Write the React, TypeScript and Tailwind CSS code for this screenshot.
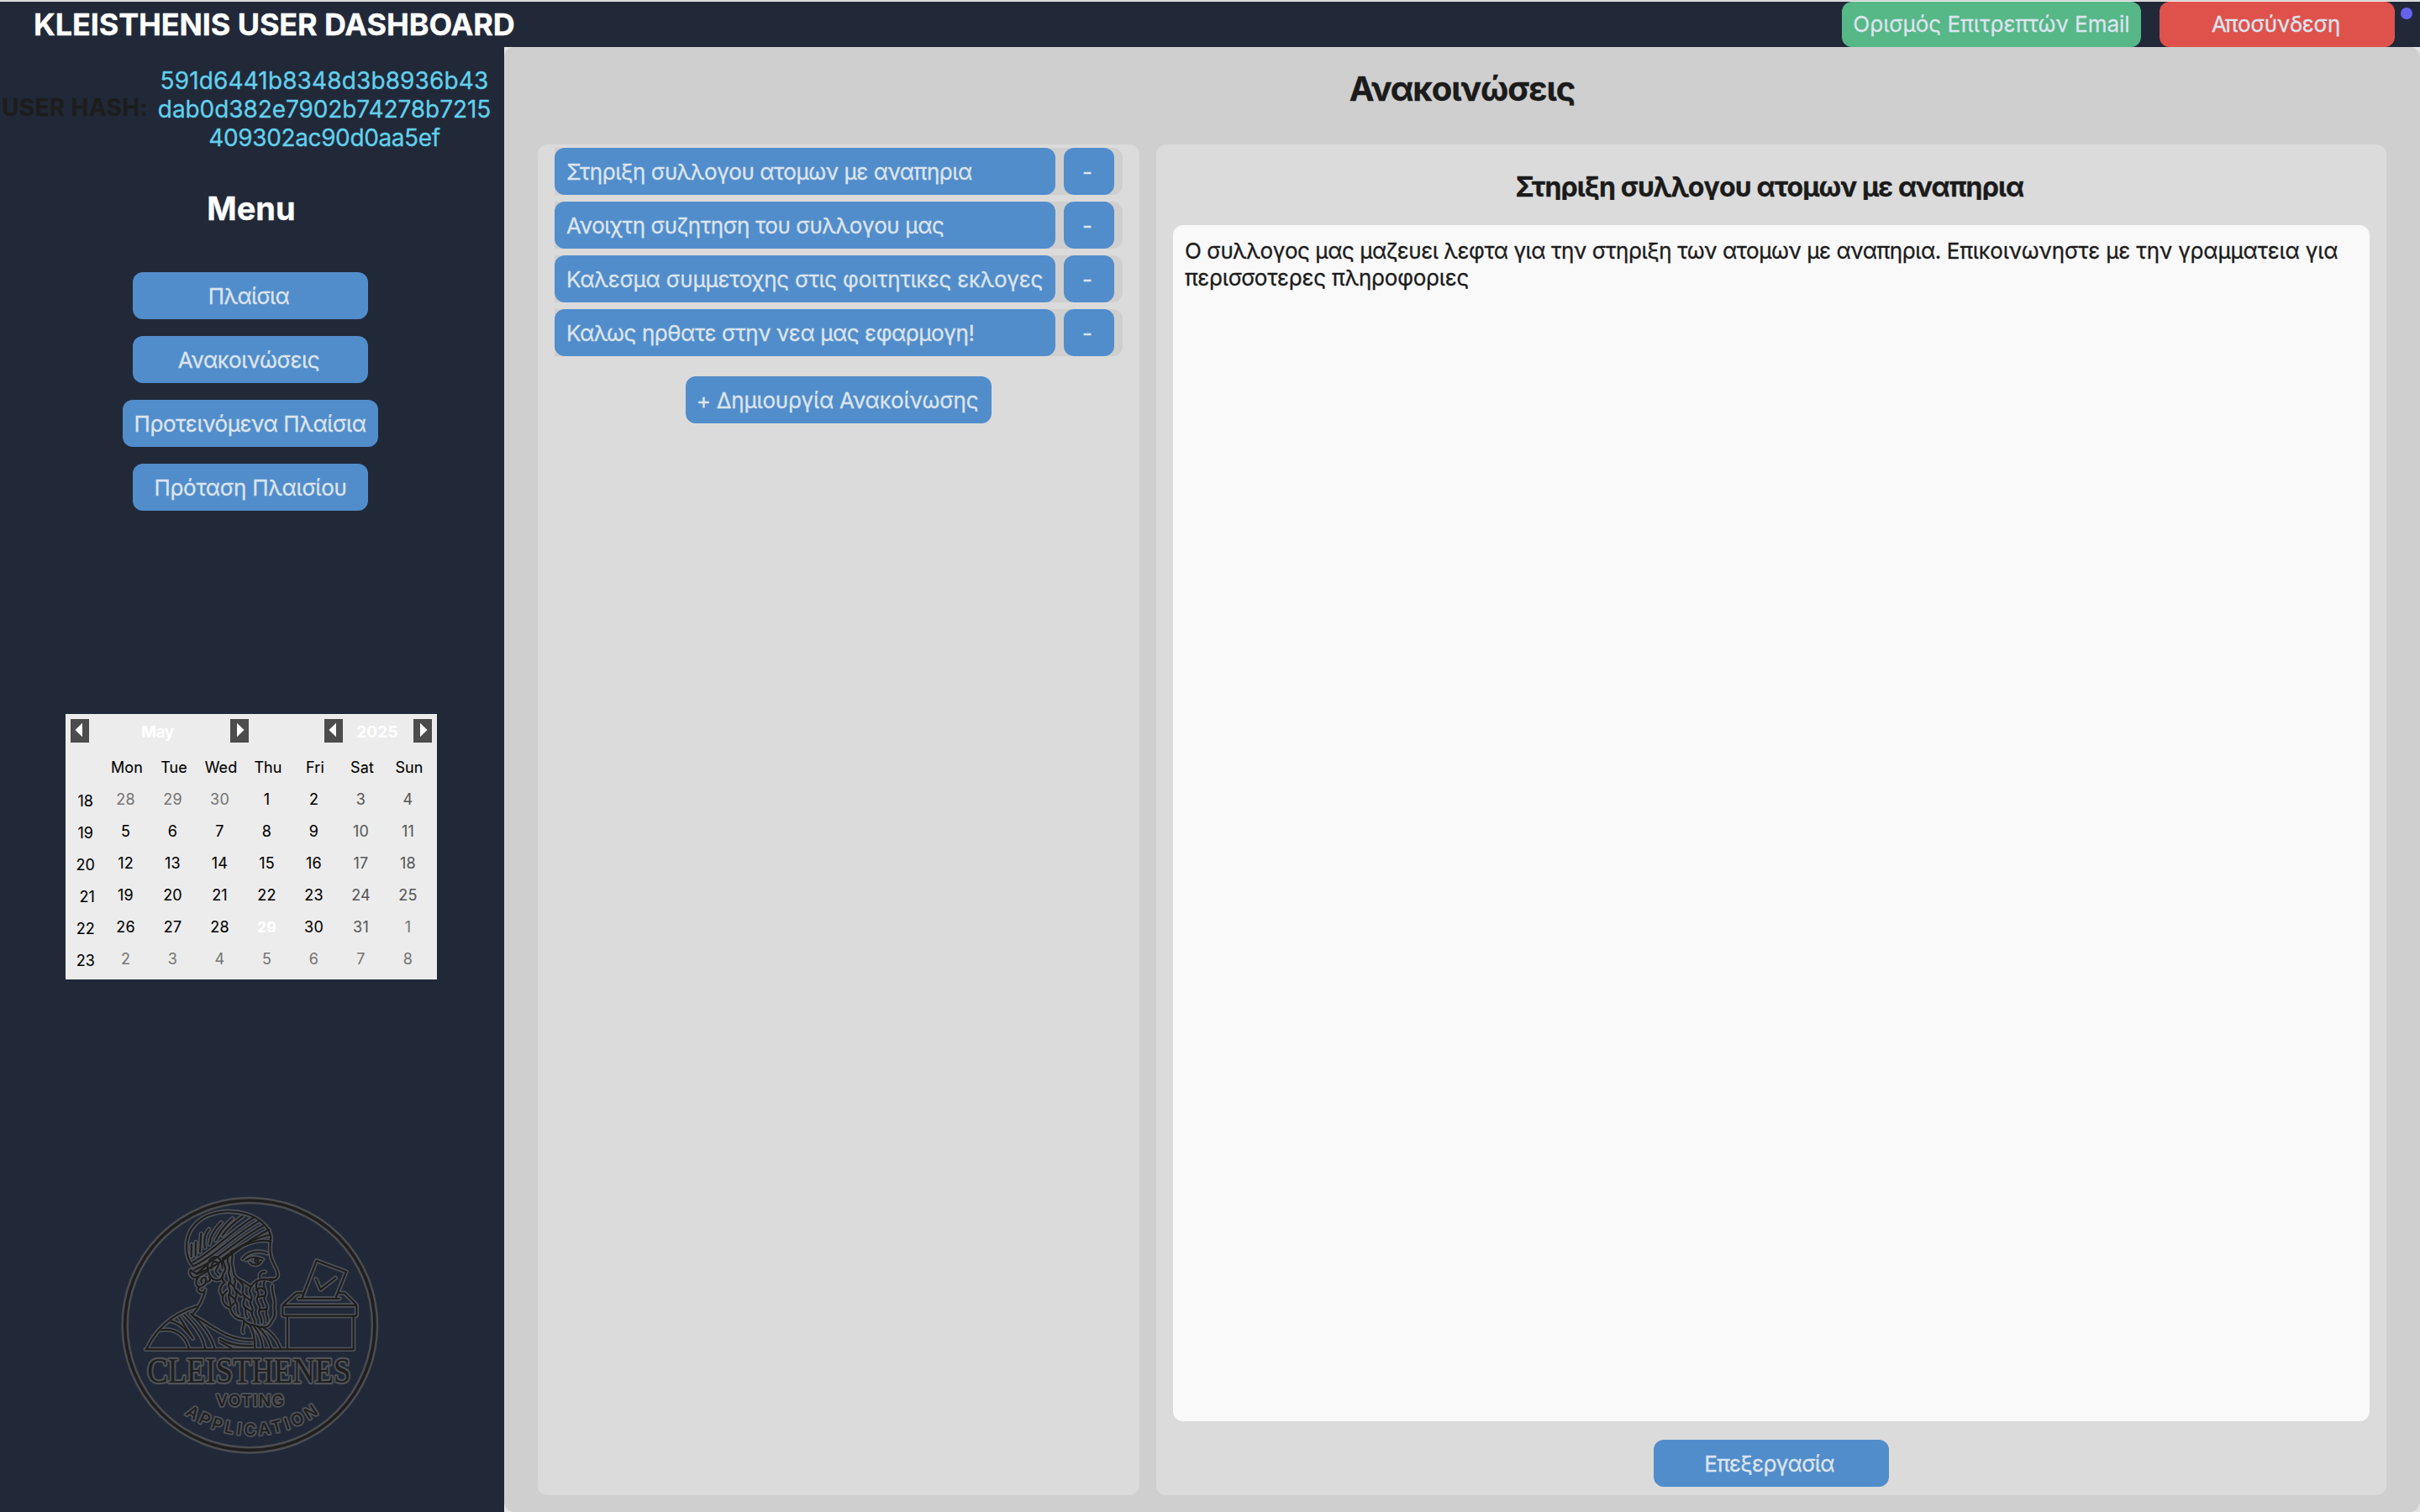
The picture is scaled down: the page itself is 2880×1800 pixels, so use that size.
import React from "react";

type Spaced = { text: string; spacing: string };

const menu: (Spaced & { width: string })[] = [
  { text: "Πλαίσια", spacing: "pr-[4px] tracking-[-0.68px]", width: "w-[280px]" },
  { text: "Ανακοινώσεις", spacing: "pr-[4px] tracking-[-0.37px]", width: "w-[280px]" },
  { text: "Προτεινόμενα Πλαίσια", spacing: "pr-[1px] tracking-[-0.4px]", width: "w-[304px]" },
  { text: "Πρόταση Πλαισίου", spacing: "tracking-[-0.3px]", width: "w-[280px]" },
];

const announcements: Spaced[] = [
  { text: "Στηριξη συλλογου ατομων με αναπηρια", spacing: "tracking-[-0.442px]" },
  { text: "Ανοιχτη συζητηση του συλλογου μας", spacing: "tracking-[-0.388px]" },
  { text: "Καλεσμα συμμετοχης στις φοιτητικες εκλογες", spacing: "tracking-[-0.2px]" },
  { text: "Καλως ηρθατε στην νεα μας εφαρμογη!", spacing: "tracking-[-0.42px]" },
];

const weekdays = ["Mon", "Tue", "Wed", "Thu", "Fri", "Sat", "Sun"];

const weeks = [
  { week: 18, days: [28, 29, 30, 1, 2, 3, 4] },
  { week: 19, days: [5, 6, 7, 8, 9, 10, 11] },
  { week: 20, days: [12, 13, 14, 15, 16, 17, 18] },
  { week: 21, days: [19, 20, 21, 22, 23, 24, 25] },
  { week: 22, days: [26, 27, 28, 29, 30, 31, 1] },
  { week: 23, days: [2, 3, 4, 5, 6, 7, 8] },
];

function dayStyle(row: number, col: number, day: number) {
  const outside = (row === 0 && day > 20) || (row >= 4 && day < 10);
  if (outside) return "text-[#777777]";
  if (row === 4 && day === 29) return "font-bold text-white";
  if (col >= 5) return "text-[#585858]";
  return "text-black";
}

function Arrow({ dir }: { dir: "left" | "right" }) {
  return (
    <button className="h-[28px] w-[22px] shrink-0 bg-[#4c4c4c]">
      <svg width="22" height="28" viewBox="0 0 22 28" fill="#ffffff" className="block">
        {dir === "left" ? <path d="M5.5 13L14 4.7V21.3Z" /> : <path d="M16.5 13L8 4.7V21.3Z" />}
      </svg>
    </button>
  );
}

function Calendar() {
  return (
    <div className="ml-[78px] h-[316px] w-[442px] bg-[#ececec] pt-[6px] text-[18px] leading-[38px] [-webkit-text-stroke:0.1px]">
      <div className="flex h-[28px] items-center px-[6px] text-[19px] font-bold leading-[30px] text-white">
        <Arrow dir="left" />
        <span className="w-[168px] pr-[5px] pt-[3px] text-center tracking-[-0.4px]">May</span>
        <Arrow dir="right" />
        <span className="w-[90px]" />
        <Arrow dir="left" />
        <span className="w-[84px] pr-[2px] pt-[3px] text-center tracking-[0.2px]">2025</span>
        <Arrow dir="right" />
      </div>
      <div className="mt-[11px] flex pl-[45px] text-black">
        {weekdays.map((d) => (
          <span key={d} className="w-[56px] text-center tracking-[0.1px]">
            {d}
          </span>
        ))}
      </div>
      {weeks.map(({ week, days }, row) => (
        <div key={week} className="flex h-[38px]">
          <span
            className={
              week === 21
                ? "w-[43.5px] pl-[8px] pt-[2px] text-center text-black"
                : "w-[43.5px] pl-[4px] pt-[2px] text-center text-black"
            }
          >
            {week}
          </span>
          {days.map((day, col) => (
            <span key={col} className={`w-[56px] text-center tracking-[0.2px] ${dayStyle(row, col, day)}`}>
              {day}
            </span>
          ))}
        </div>
      ))}
    </div>
  );
}

function LogoLines() {
  return (
    <>
      {/* head and headband */}
      <path d="M299 292C268 256 268 190 300 150C345 94 430 88 490 106C540 122 574 156 578 192" />
      <path d="M298 278C360 250 430 170 516 118" />
      <path d="M300 292C380 256 440 184 536 130" />
      <path d="M304 306C404 262 456 196 552 146" />
      <path d="M312 320C420 280 470 208 570 162" />
      <path d="M405 264C450 232 500 196 574 180" />
      <path d="M436 240C480 216 530 192 577 204" />
      <path d="M293 258L294 214M308 254L309 206M324 242L328 176M342 226C336 196 342 176 356 160M358 214C360 188 376 160 400 136M380 200C394 170 414 144 440 122M404 182C424 154 444 136 476 114" />
      {/* profile */}
      <path d="M576 192C573 232 573 254 584 276C592 294 602 308 602 322C602 336 590 342 574 337" />
      <path d="M538 333C534 318 546 310 556 312" />
      <path d="M476 266C496 240 530 234 564 246" />
      <path d="M488 270C506 258 528 258 548 268M502 278C514 290 530 290 542 276" />
      <circle cx="526" cy="272" r="6" />
      {/* ear and nape */}
      <path d="M404 300C404 268 388 254 372 260C350 268 346 302 358 324C370 346 396 348 406 328" />
      <path d="M366 300C362 280 376 270 388 280C396 292 382 300 380 308C380 318 388 318 390 324" />
      <path d="M346 290L312 320L290 306C284 326 300 338 318 330C308 344 306 362 322 366C312 374 318 388 340 386" />
      <path d="M318 330C330 318 346 316 352 308M322 366C340 362 350 350 344 334C334 330 324 340 330 350M344 348C360 350 362 340 358 330" />
      <path d="M342 376C336 410 322 436 296 466" />
      {/* beard */}
      <path d="M436 240C446 262 432 276 440 294C446 316 438 322 462 340C480 346 492 358 506 366C520 342 548 332 582 344" />
      <path d="M410 262C398 280 420 288 414 306C404 324 396 336 412 350C394 364 392 386 406 398C400 420 414 436 432 440C436 466 456 482 478 482C488 504 516 500 528 506C552 514 574 510 580 488C598 470 588 448 590 432C594 404 578 388 582 362" />
      <path d="M424 262C416 280 434 290 428 306C420 324 440 334 430 350C416 362 440 376 428 392C420 404 436 414 432 430" />
      <path d="M446 336C458 350 438 362 450 378C466 392 440 408 454 422C464 434 450 446 462 462" />
      <path d="M474 354C488 368 466 382 480 396C492 410 470 422 482 436C494 448 480 460 492 474" />
      <path d="M504 370C492 386 518 398 506 414C496 430 520 440 510 456C506 470 522 480 520 494" />
      <path d="M528 352C514 370 542 384 530 402C518 420 546 430 536 448C528 464 548 474 544 494" />
      <path d="M554 346C542 366 568 380 556 398C544 416 572 428 562 446C554 462 570 474 564 490" />
      <path d="M430 350L446 366M428 392L448 410M454 378L470 396M480 396L504 414M482 436L508 456M462 340L474 354M524 378C532 368 546 368 552 376M404 398L420 380M432 440L446 424M532 402L554 398M538 448L560 446" />
      {/* toga */}
      <path d="M134 588C154 540 206 468 312 436" />
      <path d="M186 520C240 512 274 544 284 586M220 488C254 496 274 520 298 550M250 474C264 496 280 524 298 550" />
      <path d="M268 466C302 500 336 544 342 586M292 462C330 496 366 544 376 586" />
      <path d="M302 470C372 506 420 560 512 556M396 552C420 568 450 578 512 576M396 562L436 584M480 490C484 510 470 512 478 530" />
      <path d="M500 500C518 524 520 556 520 586M516 506C536 530 546 556 548 586M530 508C556 530 570 556 578 586M544 508C580 526 600 556 612 586" />
      {/* ballot box */}
      <path d="M130 589H872V470" />
      <path d="M636 470V588" />
      <rect x="619" y="432" width="264" height="38" rx="4" />
      <path d="M622 430L668 388H694M822 388H840L882 430" />
      <path d="M676 408H822" />
      <path d="M690 402L740 272L846 312L810 402" />
      <path d="M738 338L754 376L808 334" />
    </>
  );
}

function Logo() {
  return (
    <svg
      width="340"
      height="340"
      viewBox="0 0 1020 1020"
      fill="none"
      strokeLinecap="round"
      strokeLinejoin="round"
      className="ml-[130px] block [-webkit-text-stroke:0]"
    >
      <circle cx="502" cy="503" r="446" stroke="#4b4c50" strokeWidth="26" />
      <circle cx="502" cy="503" r="446" stroke="#1e1e1f" strokeWidth="11" />
      <g stroke="#505359" strokeWidth="16">
        <LogoLines />
      </g>
      <g stroke="#1e1e1f" strokeWidth="6.5">
        <LogoLines />
      </g>
      <path id="arc" d="M262 815A410 410 0 0 0 752 815" />
      <g fill="#1e1e1f" stroke="#505256" paintOrder="stroke" className="font-['Inter']">
        <text
          x="136"
          y="708"
          textLength="726"
          lengthAdjust="spacingAndGlyphs"
          fontSize="124"
          className="font-['Liberation_Serif'] [stroke-width:13px]"
        >
          CLEISTHENES
        </text>
        <text x="382" y="793" textLength="242" fontSize="58" className="font-medium [stroke-width:11px]">
          VOTING
        </text>
        <text fontSize="58" className="font-medium [stroke-width:11px]">
          <textPath href="#arc" startOffset="10" textLength="510">
            APPLICATION
          </textPath>
        </text>
      </g>
    </svg>
  );
}

export default function App() {
  return (
    <div className="flex h-[1800px] w-[2880px] flex-col overflow-hidden bg-[#212939] font-['Inter',sans-serif] text-[26px] [-webkit-text-stroke:0.3px]">
      <div className="h-[2px] shrink-0 border-b border-[#f4f4f4] bg-[#cfcfcf]" />
      <header className="flex h-[54px] shrink-0 items-center bg-[#212939]">
        <h1 className="pl-[40px] text-[36px] font-bold tracking-[-0.129px] text-white">KLEISTHENIS USER DASHBOARD</h1>
        <button className="ml-auto h-[54px] w-[356px] rounded-[12px] bg-[#56b787] pb-[1px] text-[#dce4ee]">
          Ορισμός Επιτρεπτών Email
        </button>
        <button className="ml-[22px] h-[54px] w-[280px] rounded-[12px] bg-[#df524c] pb-[1px] pr-[3px] tracking-[-0.25px] text-[#dce4ee]">
          Αποσύνδεση
        </button>
        <span className="mb-[26px] ml-[7px] mr-[9px] size-[14px] rounded-full bg-[#6662ee]" />
      </header>

      <div className="flex min-h-0 flex-1">
        <aside className="flex w-[600px] shrink-0 flex-col bg-[#212939]">
          <div className="flex pt-[23px] text-[28px] leading-[34px]">
            <span className="w-[187px] shrink-0 pl-[2px] pt-[32px] font-bold tracking-[0.32px] text-[#1d1d1d]">
              USER HASH:
            </span>
            <div className="flex w-[398px] flex-col items-center text-[#62d0ec]">
              <span className="tracking-[0.126px]">591d6441b8348d3b8936b43</span>
              <span className="tracking-[-0.081px]">dab0d382e7902b74278b7215</span>
              <span className="tracking-[-0.387px]">409302ac90d0aa5ef</span>
            </div>
          </div>

          <h2 className="mt-[43px] h-[49px] w-[598px] text-center text-[38px] font-bold leading-[48px] text-white">
            Menu
          </h2>

          <nav className="mt-[51px] flex w-[596px] flex-col items-center gap-[20px]">
            {menu.map(({ text, spacing, width }) => (
              <button key={text} className={`h-[56px] rounded-[12px] bg-[#528dcb] text-[#dce4ee] ${width} ${spacing}`}>
                {text}
              </button>
            ))}
          </nav>

          <div className="mt-[242px]">
            <Calendar />
          </div>
          <div className="mt-[244px]">
            <Logo />
          </div>
        </aside>

        <main className="flex min-w-0 flex-1 bg-[#e4e4e4]">
          <section className="flex min-w-0 flex-1 flex-col rounded-[12px] bg-[#cfcfcf]">
            <h2 className="mt-[22px] h-[48px] overflow-hidden text-center text-[40px] font-bold leading-[56px] tracking-[-1.08px] text-[#1b1b1b]">
              Ανακοινώσεις
            </h2>

            <div className="mb-[20px] mt-[46px] flex min-h-0 flex-1 gap-[20px] px-[40px]">
              <div className="flex w-[716px] shrink-0 flex-col rounded-[12px] bg-[#dbdbdb] px-[20px] pt-[4px]">
                <div className="flex flex-col gap-[8px]">
                  {announcements.map(({ text, spacing }) => (
                    <div key={text} className="flex h-[56px] gap-[10px] rounded-r-[12px] bg-[#cfcfcf]">
                      <button
                        className={`w-[596px] whitespace-nowrap rounded-[12px] bg-[#528dcb] pl-[14px] text-left text-[#dce4ee] ${spacing}`}
                      >
                        {text}
                      </button>
                      <button className="mr-[10px] w-[60px] rounded-[12px] bg-[#528dcb] pr-[4px] text-[#dce4ee]">
                        -
                      </button>
                    </div>
                  ))}
                </div>
                <button className="mt-[24px] h-[56px] w-[364px] self-center whitespace-nowrap rounded-[12px] bg-[#528dcb] pr-[3px] tracking-[-0.218px] text-[#dce4ee]">
                  + Δημιουργία Ανακοίνωσης
                </button>
              </div>

              <div className="flex min-w-0 flex-1 flex-col rounded-[12px] bg-[#dbdbdb] px-[20px]">
                <h3 className="mt-[28px] h-[38px] overflow-hidden pr-[4px] text-center text-[32px] font-bold leading-[46px] tracking-[-0.84px] text-[#1b1b1b]">
                  Στηριξη συλλογου ατομων με αναπηρια
                </h3>
                <div className="mt-[30px] h-[1424px] rounded-[12px] bg-[#f9f9fa] px-[14px] pt-[15px] leading-[32px] text-[#1b1b1b]">
                  <p className="whitespace-nowrap tracking-[-0.16px]">
                    <span className="tracking-[-0.43px]">
                      Ο συλλογος μας μαζευει λεφτα για την στηριξη των ατομων με αναπηρια.{" "}
                    </span>
                    Επικοινωνηστε με την γραμματεια για
                  </p>
                  <p className="tracking-[-0.215px]">περισσοτερες πληροφοριες</p>
                </div>
                <button className="mt-[22px] h-[56px] w-[280px] self-center rounded-[12px] bg-[#528dcb] pr-[5px] tracking-[-0.674px] text-[#dce4ee]">
                  Επεξεργασία
                </button>
              </div>
            </div>
          </section>
        </main>
      </div>
    </div>
  );
}
